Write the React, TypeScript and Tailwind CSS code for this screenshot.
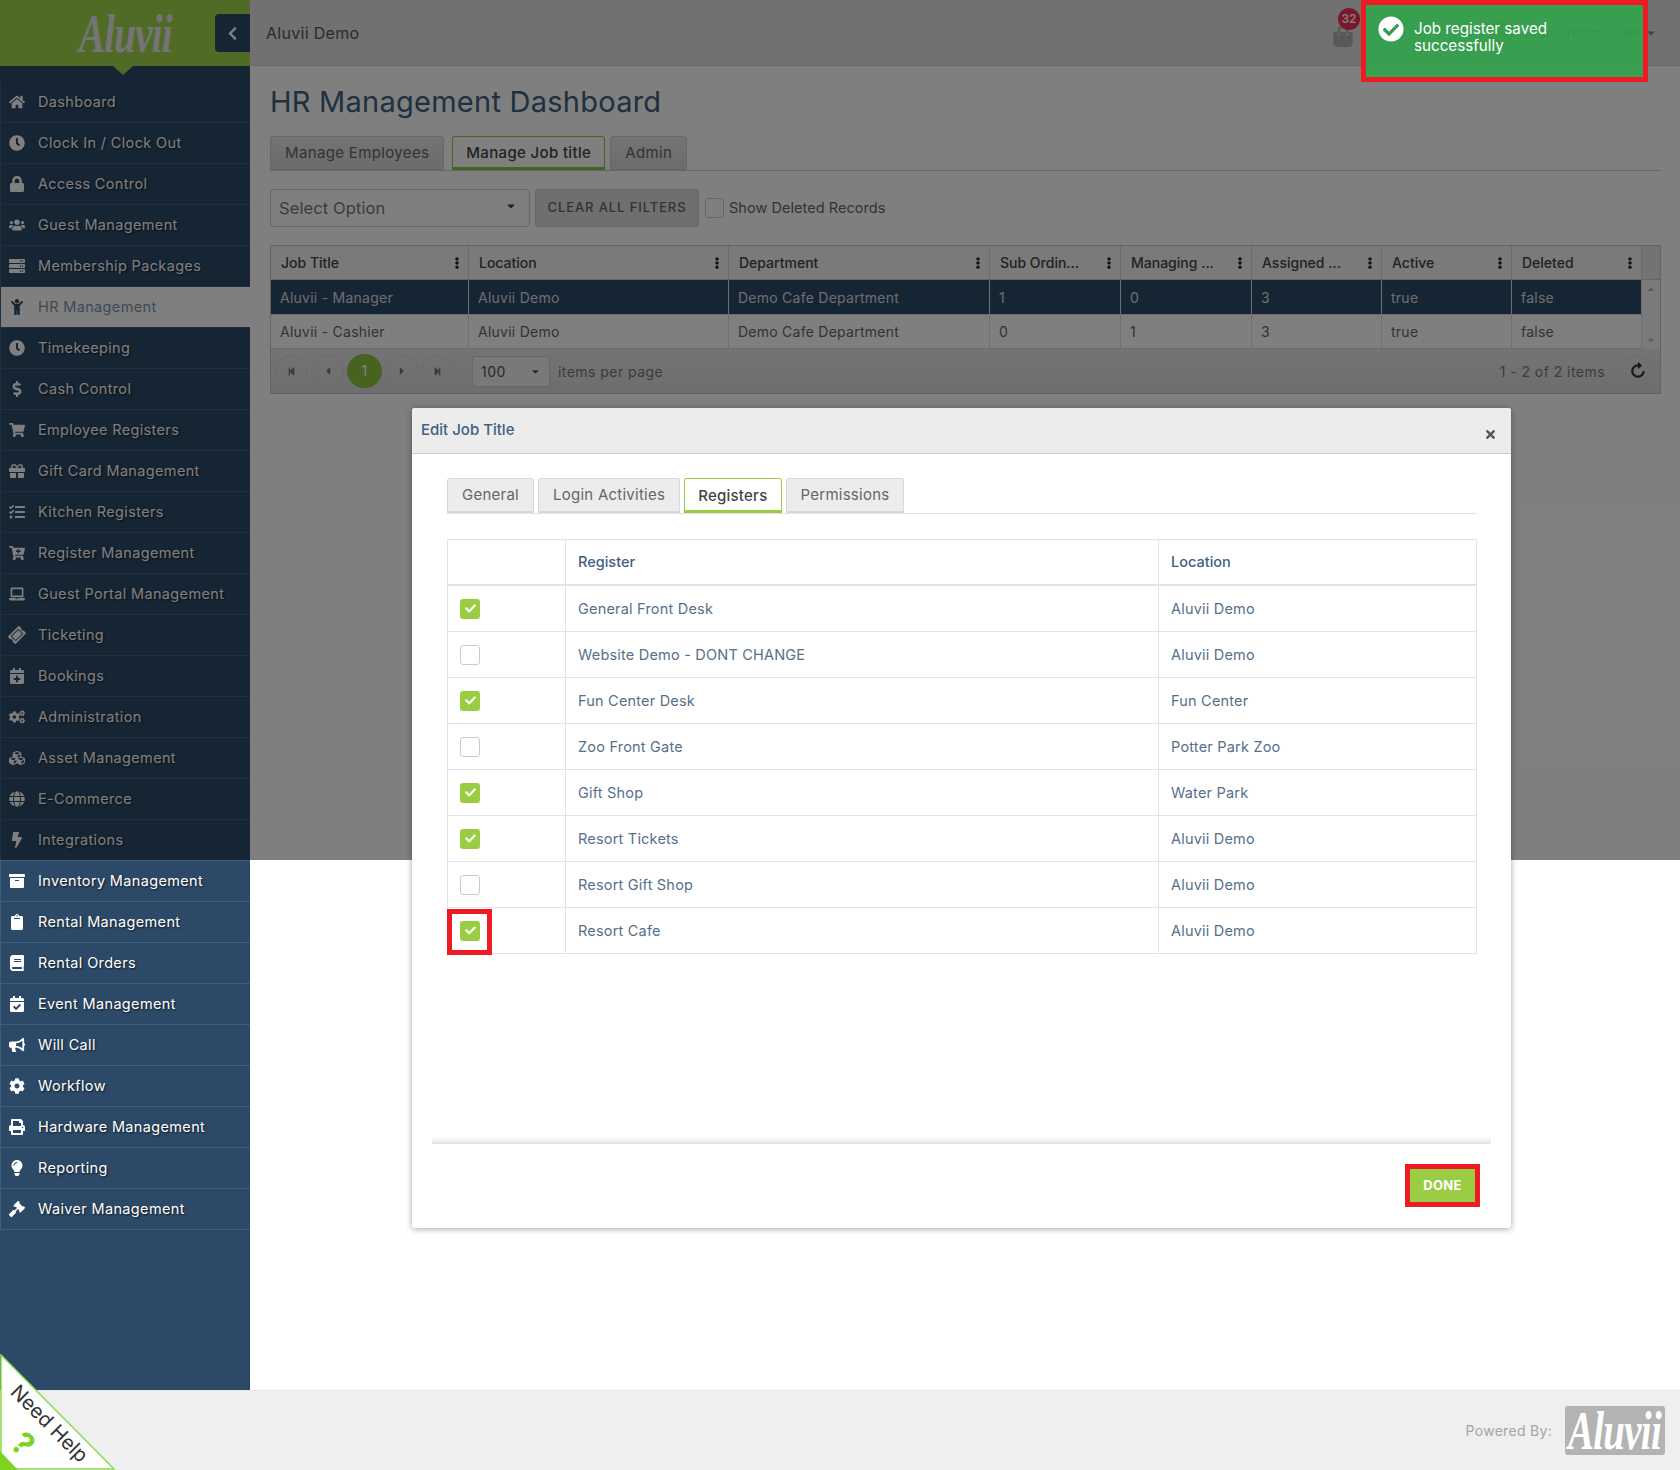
import React from "react";
import {
  FaHome,
  FaClock,
  FaLock,
  FaUsers,
  FaServer,
  FaChild,
  FaDollarSign,
  FaShoppingCart,
  FaGift,
  FaTasks,
  FaCartPlus,
  FaLaptop,
  FaTicketAlt,
  FaCalendarPlus,
  FaCogs,
  FaCubes,
  FaGlobe,
  FaBolt,
  FaArchive,
  FaClipboard,
  FaBook,
  FaCalendarCheck,
  FaBullhorn,
  FaCog,
  FaPrint,
  FaLightbulb,
  FaGavel,
  FaChevronLeft,
  FaCheck,
  FaCheckCircle,
  FaEllipsisV,
  FaStepBackward,
  FaStepForward,
  FaCaretLeft,
  FaCaretRight,
  FaCaretDown,
  FaCaretUp,
  FaShoppingBag,
  FaUserCircle,
  FaRedoAlt,
  FaTimes,
} from "react-icons/fa";

const navItems = [
  { label: "Dashboard", icon: FaHome },
  { label: "Clock In / Clock Out", icon: FaClock },
  { label: "Access Control", icon: FaLock },
  { label: "Guest Management", icon: FaUsers },
  { label: "Membership Packages", icon: FaServer },
  { label: "HR Management", icon: FaChild, active: true },
  { label: "Timekeeping", icon: FaClock },
  { label: "Cash Control", icon: FaDollarSign },
  { label: "Employee Registers", icon: FaShoppingCart },
  { label: "Gift Card Management", icon: FaGift },
  { label: "Kitchen Registers", icon: FaTasks },
  { label: "Register Management", icon: FaCartPlus },
  { label: "Guest Portal Management", icon: FaLaptop },
  { label: "Ticketing", icon: FaTicketAlt, tilt: true },
  { label: "Bookings", icon: FaCalendarPlus },
  { label: "Administration", icon: FaCogs },
  { label: "Asset Management", icon: FaCubes },
  { label: "E-Commerce", icon: FaGlobe },
  { label: "Integrations", icon: FaBolt },
  { label: "Inventory Management", icon: FaArchive },
  { label: "Rental Management", icon: FaClipboard },
  { label: "Rental Orders", icon: FaBook },
  { label: "Event Management", icon: FaCalendarCheck },
  { label: "Will Call", icon: FaBullhorn },
  { label: "Workflow", icon: FaCog },
  { label: "Hardware Management", icon: FaPrint },
  { label: "Reporting", icon: FaLightbulb },
  { label: "Waiver Management", icon: FaGavel },
];

const jobColumns = ["Job Title", "Location", "Department", "Sub Ordin...", "Managing ...", "Assigned ...", "Active", "Deleted"];

const jobRows = [
  ["Aluvii - Manager", "Aluvii Demo", "Demo Cafe Department", "1", "0", "3", "true", "false"],
  ["Aluvii - Cashier", "Aluvii Demo", "Demo Cafe Department", "0", "1", "3", "true", "false"],
];

const registers = [
  { name: "General Front Desk", location: "Aluvii Demo", checked: true },
  { name: "Website Demo - DONT CHANGE", location: "Aluvii Demo", checked: false },
  { name: "Fun Center Desk", location: "Fun Center", checked: true },
  { name: "Zoo Front Gate", location: "Potter Park Zoo", checked: false },
  { name: "Gift Shop", location: "Water Park", checked: true },
  { name: "Resort Tickets", location: "Aluvii Demo", checked: true },
  { name: "Resort Gift Shop", location: "Aluvii Demo", checked: false },
  { name: "Resort Cafe", location: "Aluvii Demo", checked: true, marked: true },
];

function Sidebar() {
  return (
    <aside className="w-[250px] shrink-0 bg-[#2c4a68]">
      <div className="relative flex h-[66px] items-start bg-[#a0d64c]">
        <span className="ml-[79px] mt-[4px] origin-left scale-x-[0.72] font-['Liberation_Serif',serif] text-[54px] leading-[60px] font-bold italic tracking-[-1px] text-[#e8e8e8]">
          Aluvii
        </span>
        <div className="absolute right-0 top-[14px] flex h-[38px] w-[35px] items-center justify-center rounded-l-[4px] bg-[#2c4a68] text-white">
          <FaChevronLeft size={15} />
        </div>
        <div className="absolute left-[113px] top-[66px] h-0 w-0 border-x-[10px] border-t-[9px] border-x-transparent border-t-[#a0d64c]" />
      </div>
      <nav className="pt-4">
        {navItems.map((item) => {
          const Icon = item.icon;
          return (
            <div
              key={item.label}
              className={`flex h-[41px] items-center border-b border-l border-b-[#3f5e7c] border-l-[#3f5e7c] pl-[8px] text-[14.5px] tracking-[0.35px] ${
                item.active
                  ? "bg-white text-[#7c93aa]"
                  : "text-white [text-shadow:1px_1px_2px_rgba(0,0,0,0.7)]"
              }`}
            >
              <span className={`w-[29px] shrink-0 ${item.active ? "text-[#2c4a68]" : ""}`}>
                <Icon size={16} className={item.tilt ? "-rotate-45" : ""} />
              </span>
              {item.label}
            </div>
          );
        })}
      </nav>
    </aside>
  );
}

function TopBar() {
  return (
    <header className="relative flex h-[66px] items-center border-b border-[#d0d0d0] bg-[#e2e2e2] pl-4 text-[16px] tracking-[0.3px] text-[#555]">
      Aluvii Demo
      <div className="ml-auto flex items-center pr-[24px] text-[#b0b0b0]">
        <div className="relative mr-[28px] mt-[6px]">
          <FaShoppingBag size={22} />
          <span className="absolute -right-[6px] -top-[17px] flex h-[22px] w-[22px] items-center justify-center rounded-full bg-[#f03050] text-[12px] font-semibold tracking-normal text-white">
            32
          </span>
        </div>
        <div className="relative mr-[87px] mt-[6px]">
          <FaShoppingCart size={20} />
          <span className="absolute -right-[8px] -top-[18px] h-[18px] w-[18px] rounded-full bg-[#8cc63f]" />
        </div>
        <FaUserCircle size={25} className="mr-[10px] text-[#8cc63f]" />
        <span className="w-[99px] text-[14px] tracking-normal text-[#3f7f55]">Aluvii Team</span>
        <span className="mr-[6px] h-[11px] w-[16px] bg-[#8fae9a]" />
        <FaCaretDown size={12} className="text-[#888]" />
      </div>
    </header>
  );
}

function Pager() {
  const btn = "flex h-[33px] w-[33px] items-center justify-center rounded-full border border-[#d8d8d8] text-[#777]";
  return (
    <div className="flex h-[44px] items-center bg-gradient-to-b from-[#e8e8e8] to-[#dcdcdc] pl-[4px] pr-[6px] text-[14px] tracking-[0.45px] text-[#777]">
      <div className="flex items-center gap-[3px]">
        <span className={btn}><FaStepBackward size={9} /></span>
        <span className={btn}><FaCaretLeft size={12} /></span>
        <span className="flex h-[34px] w-[35px] items-center justify-center rounded-full bg-[#8cc63f] text-[15px] text-white">1</span>
        <span className={btn}><FaCaretRight size={12} /></span>
        <span className={btn}><FaStepForward size={9} /></span>
      </div>
      <div className="ml-[18px] flex h-[31px] w-[78px] items-center justify-between rounded-[3px] border border-[#ccc] bg-[#f2f2f2] pl-2 pr-2 text-[#555]">
        100
        <FaCaretDown size={11} />
      </div>
      <span className="ml-2">items per page</span>
      <span className="ml-auto mr-[16px]">1 - 2 of 2 items</span>
      <span className="flex h-[33px] w-[33px] items-center justify-center rounded-full border border-[#d8d8d8] text-[#333]">
        <FaRedoAlt size={14} className="-rotate-45" />
      </span>
    </div>
  );
}

function JobTable() {
  return (
    <div className="mt-[18px] border border-[#c8c8c8]">
      <div className="grid h-[34px] grid-cols-[198px_260px_261px_131px_131px_130px_130px_130px_18px] border-b border-[#ccc] bg-[#f4f4f4] text-[14px] font-medium text-[#444]">
        {jobColumns.map((col) => (
          <div key={col} className="flex items-center justify-between border-r border-[#d4d4d4] pl-[10px] pr-[5px]">
            {col}
            <FaEllipsisV size={12} className="text-[#222]" />
          </div>
        ))}
        <div className="bg-[#e6e6e6]" />
      </div>
      <div className="relative">
        {jobRows.map((row, i) => (
          <div
            key={row[0]}
            className={`grid grid-cols-[198px_260px_261px_131px_131px_130px_130px_130px] border-b border-[#d8d8d8] text-[14px] tracking-[0.25px] ${
              i === 0 ? "h-[35px] bg-[#2c4a68] text-[#ddd]" : "h-[34px] bg-white text-[#666]"
            }`}
          >
            {row.map((cell, j) => (
              <div key={j} className="flex items-center border-r border-[#e0e0e0] pl-[9px]">
                {cell}
              </div>
            ))}
          </div>
        ))}
        <div className="absolute right-0 top-0 flex h-full w-[18px] flex-col items-center justify-between bg-[#f4f4f4] py-[4px] text-[#bbb]">
          <FaCaretUp size={10} />
          <FaCaretDown size={10} />
        </div>
      </div>
      <Pager />
    </div>
  );
}

function MainContent() {
  return (
    <main className="px-[20px] pt-[15px]">
      <h1 className="text-[29px] leading-[42px] tracking-[0.25px] text-[#41607f]">HR Management Dashboard</h1>
      <div className="mt-[13px] flex h-[35px] border-b border-[#ccc] text-[15px] tracking-[0.35px]">
        <div className="flex items-center rounded-t-[3px] border border-[#ccc] bg-gradient-to-b from-[#e8e8e8] to-[#d8d8d8] px-[14px] text-[#666]">Manage Employees</div>
        <div className="ml-[8px] flex items-center rounded-t-[3px] border border-b-[3px] border-[#8cc63f] bg-white px-[13px] pt-[2px] font-medium text-[#444]">Manage Job title</div>
        <div className="ml-[5px] flex items-center rounded-t-[3px] border border-[#ccc] bg-gradient-to-b from-[#e8e8e8] to-[#d8d8d8] px-[14px] text-[#666]">Admin</div>
      </div>
      <div className="mt-[18px] flex h-[38px] items-center">
        <div className="flex h-full w-[260px] items-center justify-between rounded-[3px] border border-[#ccc] bg-white pl-[8px] pr-[12px] text-[16.5px] tracking-[0.1px] text-[#777]">
          Select Option
          <FaCaretDown size={12} className="mb-1 text-[#444]" />
        </div>
        <div className="ml-[5px] flex h-full w-[164px] items-center justify-center rounded-[3px] border border-[#ccc] bg-[#dedede] text-[13px] font-medium tracking-[0.9px] text-[#666]">
          CLEAR ALL FILTERS
        </div>
        <span className="ml-[6px] h-[20px] w-[19px] rounded-[3px] border border-[#ccc] bg-white" />
        <span className="ml-[5px] text-[14.5px] tracking-[0.05px] text-[#666]">Show Deleted Records</span>
      </div>
      <JobTable />
    </main>
  );
}

function Toast() {
  return (
    <div className="absolute left-[1361px] top-0 z-30 h-[82px] w-[287px] border-[5px] border-[#ed1c24]">
      <div className="flex h-full items-start rounded-br-[4px] bg-[#32a44d]/90 pl-[12px] pt-[10px] text-[15.2px] leading-[17px] text-white">
        <span className="mt-[1px] shrink-0 rounded-full">
          <FaCheckCircle size={26} />
        </span>
        <span className="ml-[10px] mt-[5px] w-[190px]">Job register saved successfully</span>
      </div>
    </div>
  );
}

function Checkbox({ checked }: { checked: boolean }) {
  return checked ? (
    <span className="flex h-[20px] w-[20px] items-center justify-center rounded-[3px] bg-[#9acd43] text-white">
      <FaCheck size={11} />
    </span>
  ) : (
    <span className="h-[20px] w-[20px] rounded-[3px] border border-[#ccc] bg-white" />
  );
}

function EditModal() {
  const tabBase = "flex items-center rounded-t-[3px] border border-b-2 border-[#d8d8d8] bg-[#ececec] px-[14px] pt-[1px] text-[#666]";
  return (
    <div className="absolute left-[412px] top-[408px] z-20 h-[820px] w-[1099px] rounded-[3px] bg-white shadow-[0_1px_6px_rgba(0,0,0,0.35)]">
      <div className="relative flex h-[46px] items-center rounded-t-[3px] border-b border-[#ccc] bg-[#ececec] pl-[9px] text-[15px] font-medium text-[#41607f]">
        Edit Job Title
        <FaTimes size={13} className="absolute right-[14px] top-[20px] text-[#555]" />
      </div>
      <div className="px-[35px] pt-[24px] pr-[34px]">
        <div className="flex h-[36px] gap-[4px] border-b border-[#e2e2e2] text-[15px] tracking-[0.25px]">
          <div className={tabBase}>General</div>
          <div className={tabBase}>Login Activities</div>
          <div className="flex items-center rounded-t-[3px] border border-b-[3px] border-[#9acd43] bg-white px-[13px] pt-[3px] font-medium text-[#444]">Registers</div>
          <div className={tabBase}>Permissions</div>
        </div>
        <div className="mt-[25px] border border-b-0 border-[#dfe3ea] text-[14.5px]">
          <div className="grid h-[46px] grid-cols-[118px_593px_1fr] border-b-2 border-[#dfe3ea] font-medium text-[#41607f]">
            <div className="border-r border-[#dfe3ea]" />
            <div className="flex items-center border-r border-[#dfe3ea] pl-[12px]">Register</div>
            <div className="flex items-center pl-[12px]">Location</div>
          </div>
          {registers.map((reg) => (
            <div key={reg.name} className="grid h-[46px] grid-cols-[118px_593px_1fr] border-b border-[#dfe3ea] tracking-[0.2px] text-[#56708a]">
              <div className="relative flex items-center border-r border-[#dfe3ea] pl-[12px]">
                <Checkbox checked={reg.checked} />
                {reg.marked && <span className="absolute -left-[1px] top-[1px] h-[46px] w-[45px] border-[5px] border-[#ed1c24]" />}
              </div>
              <div className="flex items-center border-r border-[#dfe3ea] pl-[12px]">{reg.name}</div>
              <div className="flex items-center pl-[12px]">{reg.location}</div>
            </div>
          ))}
        </div>
      </div>
      <div className="absolute bottom-[84px] left-[20px] right-[20px] h-[8px] border-b-2 border-[#e4e4ea] bg-gradient-to-b from-white to-[#f0f0f0]" />
      <div className="absolute right-[31px] top-[756px] flex h-[43px] w-[75px] items-center justify-center border-[5px] border-[#ed1c24] bg-[#9acd43] text-[13px] font-bold tracking-[0.3px] text-white">
        DONE
      </div>
    </div>
  );
}

function NeedHelp() {
  return (
    <div className="absolute bottom-0 left-0 z-10 h-[116px] w-[116px]">
      <svg width="116" height="116" viewBox="0 0 116 116" className="absolute inset-0">
        <polygon points="1,1 1,115 114,115" fill="#fff" stroke="#8fdc4a" strokeWidth="1.5" />
        <polygon points="0,97 0,116 18,116" fill="#7ed321" />
      </svg>
      <span className="absolute left-[1px] top-[55px] w-[90px] rotate-45 text-center text-[20px] leading-[22px] whitespace-nowrap text-[#333]">Need Help</span>
      <span className="absolute left-[14px] top-[74px] rotate-45 text-[32px] leading-[32px] font-bold text-[#7ed321]">?</span>
    </div>
  );
}

function Footer() {
  return (
    <footer className="flex h-[80px] items-center justify-end border-t border-[#e6e6e6] bg-[#efefef] pr-[15px] text-[14px] tracking-[0.3px] text-[#a5a5a5]">
      Powered By:
      <div className="ml-[13px] flex h-[49px] w-[100px] items-center justify-center overflow-hidden rounded-[3px] bg-[#b3b3b3]">
        <span className="scale-x-[0.72] font-['Liberation_Serif',serif] text-[54px] leading-[50px] font-bold italic tracking-[-1px] text-white">Aluvii</span>
      </div>
    </footer>
  );
}

export default function App() {
  return (
    <div className="relative h-[1470px] w-[1680px] overflow-hidden bg-white [font-family:Inter,sans-serif]">
      <div className="flex h-[1390px]">
        <Sidebar />
        <div className="flex-1">
          <TopBar />
          <MainContent />
        </div>
      </div>
      <Footer />
      <div className="absolute left-0 top-0 z-10 h-[860px] w-full bg-black/50" />
      <NeedHelp />
      <EditModal />
      <Toast />
    </div>
  );
}
